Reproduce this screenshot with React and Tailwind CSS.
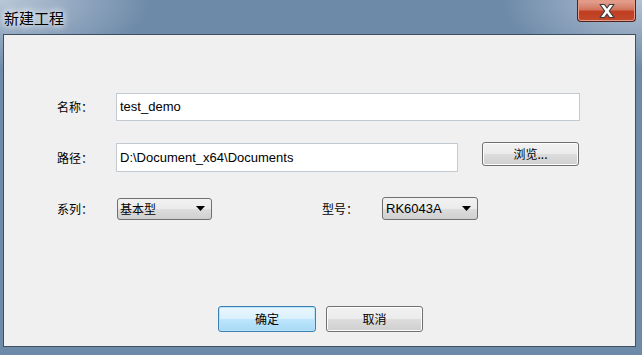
import React from "react";

const cjk = { fontFamily: '"Noto Sans CJK SC", "Noto Sans", sans-serif' };
const latin = { fontFamily: '"Liberation Sans", Arial, sans-serif' };

const Label = ({ children, className = "" }) => (
  <div className={"flex items-center text-[12px] text-black " + className} style={cjk}>
    {children}
  </div>
);

const Arrow = () => (
  <svg width="9" height="5" viewBox="0 0 9 5" className="shrink-0">
    <path d="M0 0H9L4.5 5Z" fill="#000" />
  </svg>
);

const Select = ({ value, font, className = "" }) => (
  <div
    className={
      "flex items-center justify-between pl-[2px] pr-[6px] rounded-[3px] border border-[#707070] bg-[linear-gradient(180deg,#f2f2f2_0%,#ebebeb_50%,#dddddd_51%,#cfcfcf_100%)] " +
      className
    }
  >
    <span className="text-black leading-none" style={font}>
      {value}
    </span>
    <Arrow />
  </div>
);

const Button = ({ children, primary, className = "" }) => (
  <div
    className={
      "flex items-center justify-center rounded-[3px] border text-[12px] text-black " +
      (primary
        ? "border-[#3c7fb1] bg-[linear-gradient(180deg,#eaf6fd_0%,#d9f0fc_50%,#bee6fd_51%,#a7d9f5_100%)] shadow-[inset_0_0_0_1px_#b7e3fb] "
        : "border-[#707070] bg-[linear-gradient(180deg,#f2f2f2_0%,#ebebeb_50%,#dddddd_51%,#cfcfcf_100%)] shadow-[inset_0_0_0_1px_#fcfcfc] ") +
      className
    }
    style={cjk}
  >
    {children}
  </div>
);

export default function App() {
  return (
    <div className="w-[642px] h-[355px] flex flex-col overflow-hidden bg-[#6e8aa9] bg-[radial-gradient(ellipse_150px_70px_at_0_0,#b9c7d8_0%,rgba(185,199,216,0)_100%),radial-gradient(ellipse_140px_70px_at_100%_0,#b4c2d4_0%,rgba(180,194,212,0)_100%)]">
      {/* title bar */}
      <div className="h-[34px] flex items-start shrink-0">
        <div
          className="pl-[4px] pt-[8px] text-[15px] leading-[20px] text-black [text-shadow:0_0_6px_#ffffff,0_0_10px_#ffffff]"
          style={cjk}
        >
          新建工程
        </div>
        <div className="ml-auto mr-[6px] w-[59px] h-[22px] rounded-b-[4px] border border-t-0 border-[#4f2420] bg-[linear-gradient(180deg,#e4a596_0%,#d2775f_45%,#c03d20_55%,#c24a2c_100%)] shadow-[inset_0_0_0_1px_#e69a86] flex items-center justify-center">
          <svg width="20" height="16" viewBox="0 0 20 16">
            <path
              d="M3 1.5H7.5L10 5L12.5 1.5H17L12.3 8L17 14.5H12.5L10 11L7.5 14.5H3L7.7 8Z"
              fill="#ffffff"
              stroke="#3c3c3c"
              strokeWidth="1.2"
              strokeLinejoin="round"
            />
          </svg>
        </div>
      </div>

      {/* client area */}
      <div className="ml-[3px] mr-[6px] h-[313px] shrink-0 border border-[#3f4f62] bg-[#f0f0f0] flex flex-col">
        <div className="pl-[53px] pt-[58px] flex flex-col">
          {/* name */}
          <div className="flex h-[28px]">
            <Label className="w-[59px]">名称：</Label>
            <div
              className="w-[464px] border border-[#c3cad2] bg-white flex items-center pl-[3px] text-[13px] text-black"
              style={latin}
            >
              test_demo
            </div>
          </div>

          {/* path */}
          <div className="flex mt-[21px]">
            <Label className="w-[59px] h-[29px] mt-[1px]">路径：</Label>
            <div
              className="w-[342px] h-[29px] mt-[1px] border border-[#c3cad2] bg-white flex items-center pl-[3px] text-[13px] text-black"
              style={latin}
            >
              D:\Document_x64\Documents
            </div>
            <Button className="ml-[24px] w-[97px] h-[24px]">浏览...</Button>
          </div>

          {/* series / model */}
          <div className="flex mt-[25px] items-center">
            <Label className="w-[60px] h-[22px]">系列：</Label>
            <Select value="基本型" font={{ ...cjk, fontSize: "12px" }} className="w-[95px] h-[22px]" />
            <Label className="ml-[110px] w-[60px] h-[22px]">型号：</Label>
            <Select
              value="RK6043A"
              font={{ ...latin, fontSize: "13px" }}
              className="w-[96px] h-[23px] pl-[3px]"
            />
          </div>

          {/* buttons */}
          <div className="flex mt-[86px] pl-[161px] gap-[10px]">
            <Button primary className="w-[98px] h-[26px]">
              确定
            </Button>
            <Button className="w-[97px] h-[26px]">取消</Button>
          </div>
        </div>
      </div>
    </div>
  );
}
